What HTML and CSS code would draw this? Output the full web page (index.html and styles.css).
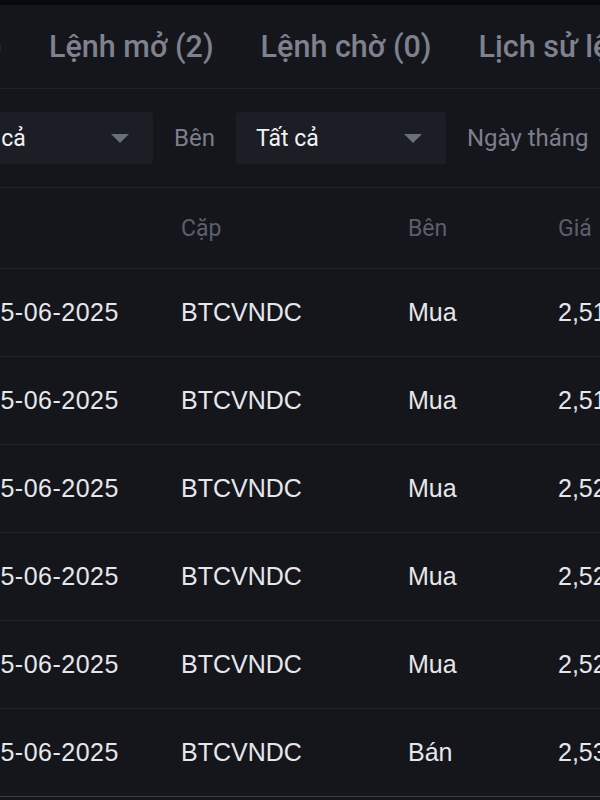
FILE: index.html
```html
<!DOCTYPE html>
<html lang="vi">
<head>
  <meta charset="UTF-8">
  <title>Lịch sử lệnh</title>
  <meta name="viewport" content="width=device-width, initial-scale=1.0">
  <link rel="stylesheet" href="styles.css">
</head>
<body>
  <div class="topbar"></div>

  <nav class="tabs">
    <span class="tab cut">Vị thế (0)</span>
    <span class="tab">Lệnh mở (2)</span>
    <span class="tab">Lệnh chờ (0)</span>
    <span class="tab">Lịch sử lệnh</span>
    <span class="tab">Lịch sử giao dịch</span>
  </nav>

  <div class="filters">
    <div class="select">
      <span>Tất cả</span>
      <i class="caret"></i>
    </div>
    <span class="label">Bên</span>
    <div class="select">
      <span>Tất cả</span>
      <i class="caret"></i>
    </div>
    <span class="label">Ngày tháng</span>
  </div>

  <div class="table">
    <div class="row head">
      <span>Thời gian</span>
      <span>Cặp</span>
      <span>Bên</span>
      <span>Giá</span>
    </div>
    <div class="row">
      <span class="date">25-06-2025</span>
      <span>BTCVNDC</span>
      <span>Mua</span>
      <span>2,519,000,000</span>
    </div>
    <div class="row">
      <span class="date">25-06-2025</span>
      <span>BTCVNDC</span>
      <span>Mua</span>
      <span>2,518,500,000</span>
    </div>
    <div class="row">
      <span class="date">25-06-2025</span>
      <span>BTCVNDC</span>
      <span>Mua</span>
      <span>2,520,000,000</span>
    </div>
    <div class="row">
      <span class="date">25-06-2025</span>
      <span>BTCVNDC</span>
      <span>Mua</span>
      <span>2,522,000,000</span>
    </div>
    <div class="row">
      <span class="date">25-06-2025</span>
      <span>BTCVNDC</span>
      <span>Mua</span>
      <span>2,524,500,000</span>
    </div>
    <div class="row last">
      <span class="date">25-06-2025</span>
      <span>BTCVNDC</span>
      <span>Bán</span>
      <span>2,530,000,000</span>
    </div>
  </div>
</body>
</html>
```

FILE: styles.css
```css
:root {
  --bg: #14161b;
  --line: #202228;
  --field: #1c1e26;
  --text: #e6e7ea;
  --muted: #7a7f8b;
  --dim: #5a5f6b;
}

body {
  margin: 0;
  background: var(--bg);
  color: var(--text);
  font-family: 'Liberation Sans', Arial, sans-serif;
  overflow: hidden;
  white-space: nowrap;
}

.topbar {
  height: 5px;
  background: #08090c;
}

/* tabs */
.tabs {
  display: flex;
  align-items: center;
  gap: 47px;
  height: 82px;
  padding-bottom: 1px;
  border-bottom: 1px solid var(--line);
}

.tab {
  flex: none;
  font-family: Roboto, 'Noto Sans', sans-serif;
  font-size: 30.5px;
  font-weight: 500;
  color: #7d828e;
}

.tab.cut {
  width: 150px;
  margin-left: -148px;
  text-align: right;
}

/* filters */
.filters {
  display: flex;
  align-items: center;
  gap: 21px;
  height: 98px;
  margin-left: -57px;
  border-bottom: 1px solid var(--line);
  font-family: Roboto, 'Noto Sans', sans-serif;
  font-size: 24px;
}

.select {
  flex: none;
  box-sizing: border-box;
  width: 210px;
  height: 52px;
  padding: 0 24px 0 20px;
  background: var(--field);
  border-radius: 4px;
  display: flex;
  align-items: center;
  justify-content: space-between;
  color: #f0f1f4;
  font-size: 23px;
}

.caret {
  width: 0;
  height: 0;
  border-left: 9px solid transparent;
  border-right: 9px solid transparent;
  border-top: 9px solid #6a6f7a;
}

.label {
  color: var(--muted);
}

/* table */
.table {
  margin-left: -14px;
}

.row {
  display: grid;
  grid-template-columns: 195px 227px 150px 1fr;
  align-items: center;
  box-sizing: border-box;
  height: 88px;
  border-bottom: 1px solid var(--line);
  font-size: 25px;
}

.row .date {
  letter-spacing: .5px;
}

.row.head {
  height: 81px;
  font-family: Roboto, 'Noto Sans', sans-serif;
  font-size: 23px;
  color: var(--dim);
}

.row.head span:first-child {
  visibility: hidden;
}

.row.last {
  border-bottom-color: #3c3f47;
}
```
